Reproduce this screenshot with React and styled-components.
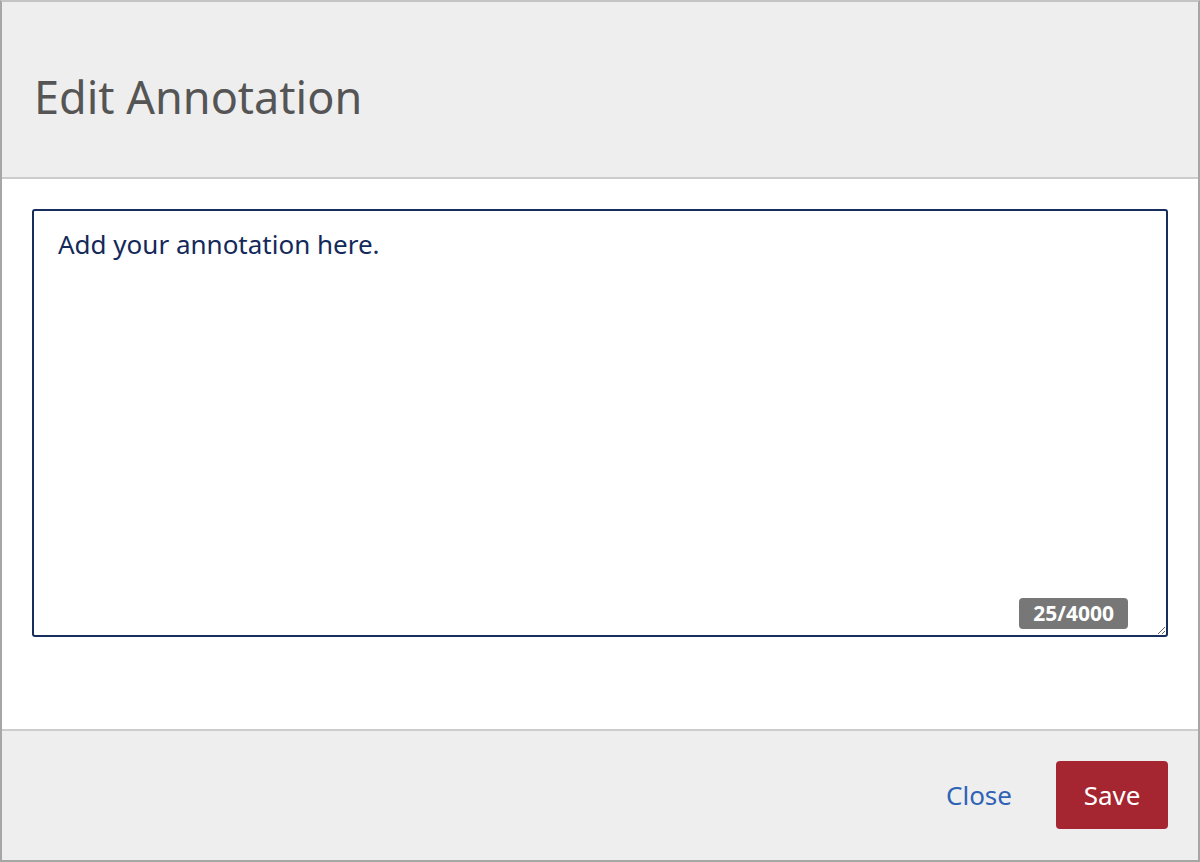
import React, { useState } from "react";
import styled, { createGlobalStyle } from "styled-components";

const MAX_LENGTH = 4000;

export default function App() {
  const [text, setText] = useState("Add your annotation here.");

  return (
    <>
      <GlobalStyle />
      <Modal>
        <Header>
          <Title>Edit Annotation</Title>
        </Header>
        <Body>
          <Field>
            <TextArea
              value={text}
              maxLength={MAX_LENGTH}
              onChange={(e) => setText(e.target.value)}
            />
            <Counter>
              {text.length}/{MAX_LENGTH}
            </Counter>
          </Field>
        </Body>
        <Footer>
          <LinkButton type="button">Close</LinkButton>
          <PrimaryButton type="button">Save</PrimaryButton>
        </Footer>
      </Modal>
    </>
  );
}

const GlobalStyle = createGlobalStyle`
  html, body {
    margin: 0;
    padding: 0;
    background: #ffffff;
  }

  body {
    font-family: "Noto Sans", "Open Sans", sans-serif;
  }

  * {
    box-sizing: border-box;
  }
`;

const Modal = styled.div`
  width: 1200px;
  height: 862px;
  display: flex;
  flex-direction: column;
  border: 2px solid #a6a6a6;
  border-top-color: #c4c4c4;
  background: #ffffff;
`;

const Header = styled.div`
  height: 177px;
  display: flex;
  align-items: center;
  padding: 14px 32px 0;
  background: #eeeeee;
  border-bottom: 2px solid #cccccc;
`;

const Title = styled.h1`
  margin: 0;
  font-size: 45px;
  font-weight: 400;
  color: #555555;
`;

const Body = styled.div`
  flex: 1;
  padding: 30px 30px 91px;
`;

const Field = styled.div`
  position: relative;
  height: 428px;
`;

const TextArea = styled.textarea`
  display: block;
  width: 100%;
  height: 100%;
  padding: 16px 24px;
  border: 2px solid #172d5c;
  border-radius: 3px;
  resize: both;
  outline: none;
  font-family: "Noto Sans", "Open Sans", sans-serif;
  font-size: 26px;
  line-height: 34px;
  color: #13295a;
  background: #ffffff;
`;

const Counter = styled.span`
  position: absolute;
  right: 40px;
  bottom: 8px;
  padding: 1px 14px 2px;
  border-radius: 4px;
  background: #777777;
  color: #ffffff;
  font-family: "Noto Sans", "Open Sans", sans-serif;
  font-size: 21px;
  font-weight: 700;
  line-height: 28px;
`;

const Footer = styled.div`
  height: 131px;
  display: flex;
  align-items: center;
  justify-content: flex-end;
  gap: 44px;
  padding: 0 30px 2px;
  background: #eeeeee;
  border-top: 2px solid #cccccc;
`;

const LinkButton = styled.button`
  padding: 0;
  border: none;
  background: none;
  font-family: "Noto Sans", "Open Sans", sans-serif;
  font-size: 26px;
  color: #2f63b6;
  cursor: pointer;
`;

const PrimaryButton = styled.button`
  width: 112px;
  height: 68px;
  border: none;
  border-radius: 4px;
  background: #a52631;
  font-family: "Noto Sans", "Open Sans", sans-serif;
  font-size: 26px;
  color: #ffffff;
  cursor: pointer;
`;
